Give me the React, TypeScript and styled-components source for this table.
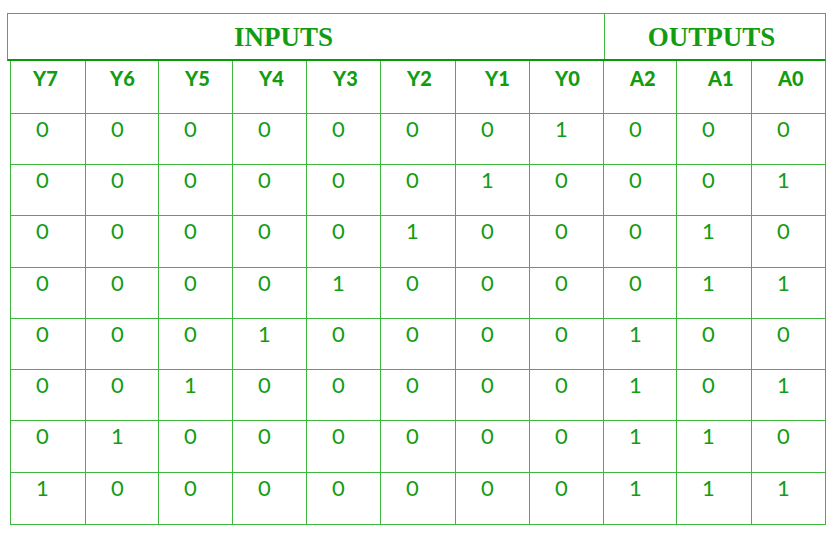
import React from "react"
import styled, { createGlobalStyle } from "styled-components"

const green = "#129c12"
const line = "#3db83d"

const GlobalStyle = createGlobalStyle`
  html, body {
    margin: 0;
    padding: 0;
    background: #fff;
  }
`

const Page = styled.div`
  padding: 13px 0 0 7px;
  width: 836px;
  height: 541px;
  box-sizing: border-box;
`

const TitleRow = styled.div`
  display: flex;
  width: 819px;
  height: 48px;
  box-sizing: border-box;
  border: 1px solid ${line};
  border-bottom: 2px solid #079c07;
`

const Title = styled.div<{ width?: number; offset: number }>`
  ${(p) => (p.width ? `width: ${p.width}px;` : "flex: 1;")}
  box-sizing: border-box;
  padding-right: ${(p) => p.offset}px;
  padding-top: 1px;
  text-align: center;
  line-height: 44px;
  font-family: "Liberation Serif", "Times New Roman", serif;
  font-weight: bold;
  font-size: 27px;
  color: ${green};
  & + & {
    border-left: 1px solid ${line};
  }
`

const Grid = styled.div`
  display: grid;
  margin-left: 3px;
  width: 816px;
  box-sizing: border-box;
  border-left: 1px solid ${line};
  grid-template-columns: 75px 73px 74px 74px 74px 75px 74px 74px 73px 75px 74px;
  grid-template-rows: 53px 51px 51px 52px 51px 51px 51px 52px 52px;
`

const Cell = styled.div`
  box-sizing: border-box;
  border-right: 1px solid ${line};
  border-bottom: 1px solid ${line};
  color: ${green};
  font-family: Lato, "Liberation Sans", sans-serif;
  line-height: 1.2;
`

const HeadCell = styled(Cell)<{ indent: number }>`
  padding: 5px 0 0 ${(p) => p.indent}px;
  font-size: 20px;
  font-weight: 900;
`

const ValueCell = styled(Cell)`
  padding: 2px 0 0 25px;
  font-size: 22px;
`

const headers: [string, number][] = [
  ["Y7", 22],
  ["Y6", 24],
  ["Y5", 26],
  ["Y4", 26],
  ["Y3", 26],
  ["Y2", 26],
  ["Y1", 29],
  ["Y0", 25],
  ["A2", 26],
  ["A1", 31],
  ["A0", 26],
]

// one-hot inputs Y7..Y0 -> binary outputs A2 A1 A0
const rows = Array.from({ length: 8 }, (_, n) => {
  const inputs = Array.from({ length: 8 }, (_, i) => (7 - i === n ? 1 : 0))
  const outputs = [2, 1, 0].map((b) => (n >> b) & 1)
  return [...inputs, ...outputs]
})

const App = () => {
  return (
    <>
      <GlobalStyle />
      <Page>
        <TitleRow>
          <Title width={596} offset={45}>
            INPUTS
          </Title>
          <Title offset={7}>OUTPUTS</Title>
        </TitleRow>
        <Grid>
          {headers.map(([label, indent]) => (
            <HeadCell key={label} indent={indent}>
              {label}
            </HeadCell>
          ))}
          {rows.map((row, r) =>
            row.map((value, c) => <ValueCell key={`${r}-${c}`}>{value}</ValueCell>)
          )}
        </Grid>
      </Page>
    </>
  )
}

export default App
